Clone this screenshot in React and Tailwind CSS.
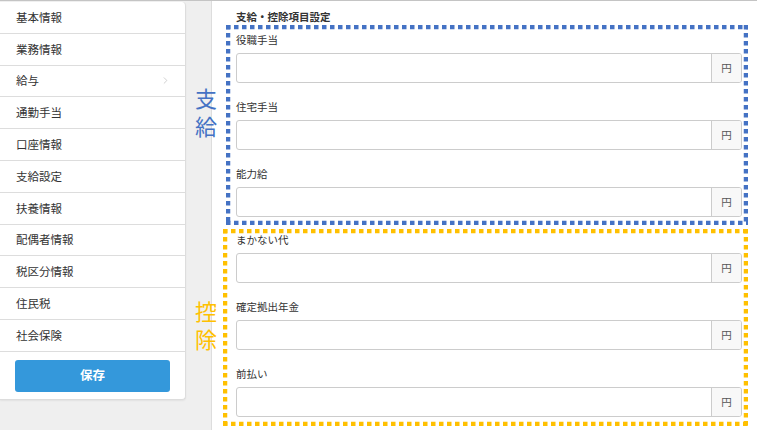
import { ChevronRight } from 'lucide-react';

const menuItems = [
  '基本情報',
  '業務情報',
  '給与',
  '通勤手当',
  '口座情報',
  '支給設定',
  '扶養情報',
  '配偶者情報',
  '税区分情報',
  '住民税',
  '社会保険',
];

const paymentFields = ['役職手当', '住宅手当', '能力給'];
const deductionFields = ['まかない代', '確定拠出年金', '前払い'];

function DottedFrame({ color }) {
  return (
    <svg className="pointer-events-none absolute inset-0 h-full w-full" aria-hidden="true">
      <line x1="0" y1="2" x2="100%" y2="2" stroke={color} strokeWidth="4.5" strokeDasharray="4.5 3.5" />
      <line x1="0" y1="calc(100% - 2px)" x2="100%" y2="calc(100% - 2px)" stroke={color} strokeWidth="4.5" strokeDasharray="4.5 3.5" />
      <line x1="2" y1="0" x2="2" y2="100%" stroke={color} strokeWidth="4.5" strokeDasharray="4.5 3.5" />
      <line x1="calc(100% - 2px)" y1="0" x2="calc(100% - 2px)" y2="100%" stroke={color} strokeWidth="4.5" strokeDasharray="4.5 3.5" />
    </svg>
  );
}

function YenField({ label }) {
  return (
    <div className="mb-[17px]">
      <div className="h-[14px] text-[10.5px] leading-[14px] text-[#333]">{label}</div>
      <div className="mt-[6px] flex h-[30px] w-[506px] overflow-hidden rounded-[3px] border border-[#cccccc] bg-white">
        <input type="text" className="min-w-0 flex-1 px-2 text-[11px] outline-none" />
        <span className="flex w-[30px] items-center justify-center border-l border-[#cccccc] bg-[#f8f8f8] text-[10.5px] text-[#555]">
          円
        </span>
      </div>
    </div>
  );
}

export default function App() {
  return (
    <div
      className="relative flex h-[430px] w-[757px] overflow-hidden border-t border-[#c4c4c4] bg-[#efefef]"
      style={{ fontFamily: '"Noto Sans CJK JP", "Noto Sans", sans-serif' }}
    >
      {/* サイドメニュー */}
      <div className="w-[211px] shrink-0 pt-[1px]">
        <div className="w-[186px] rounded-r-[4px] border-r border-b border-[#dddddd] bg-white shadow-[0_1px_2px_rgba(0,0,0,0.06)]">
          {menuItems.map((item) => (
            <div
              key={item}
              className="flex h-[31.8px] items-center justify-between border-b border-[#dddddd] pl-[16px] pr-[14px] text-[11.5px] text-[#333]"
            >
              <span>{item}</span>
              {item === '給与' && <ChevronRight size={11} strokeWidth={1.5} className="text-[#bbbbbb]" />}
            </div>
          ))}
          <div className="px-[15px] pt-[8px] pb-[7px]">
            <button className="flex h-[32px] w-full items-center justify-center rounded-[3px] bg-[#3498db] text-[12.5px] font-bold text-white">
              保存
            </button>
          </div>
        </div>
      </div>

      {/* メイン */}
      <div className="flex-1 border-l border-[#dddddd] bg-white">
        <div className="pl-[24px] pt-[8px] text-[10.5px] font-bold leading-[15px] text-[#333]">支給・控除項目設定</div>

        <div className="relative ml-[14px] mt-[1px] h-[200px] w-[522px] pl-[10px] pt-[8px]">
          <DottedFrame color="#4472c4" />
          {paymentFields.map((f) => (
            <YenField key={f} label={f} />
          ))}
        </div>

        <div className="relative ml-[11px] mt-[4px] h-[197px] w-[525px] pl-[13px] pt-[4px]">
          <DottedFrame color="#ffc000" />
          {deductionFields.map((f) => (
            <YenField key={f} label={f} />
          ))}
        </div>
      </div>

      {/* 注釈ラベル */}
      <div className="absolute left-[195px] top-[85px] flex flex-col gap-[6px] text-[22px] leading-[22px] text-[#4472c4]">
        <span className="block h-[22px]">支</span>
        <span className="block h-[22px]">給</span>
      </div>
      <div className="absolute left-[195px] top-[298px] flex flex-col gap-[6px] text-[22px] leading-[22px] text-[#ffc000]">
        <span className="block h-[22px]">控</span>
        <span className="block h-[22px]">除</span>
      </div>
    </div>
  );
}
